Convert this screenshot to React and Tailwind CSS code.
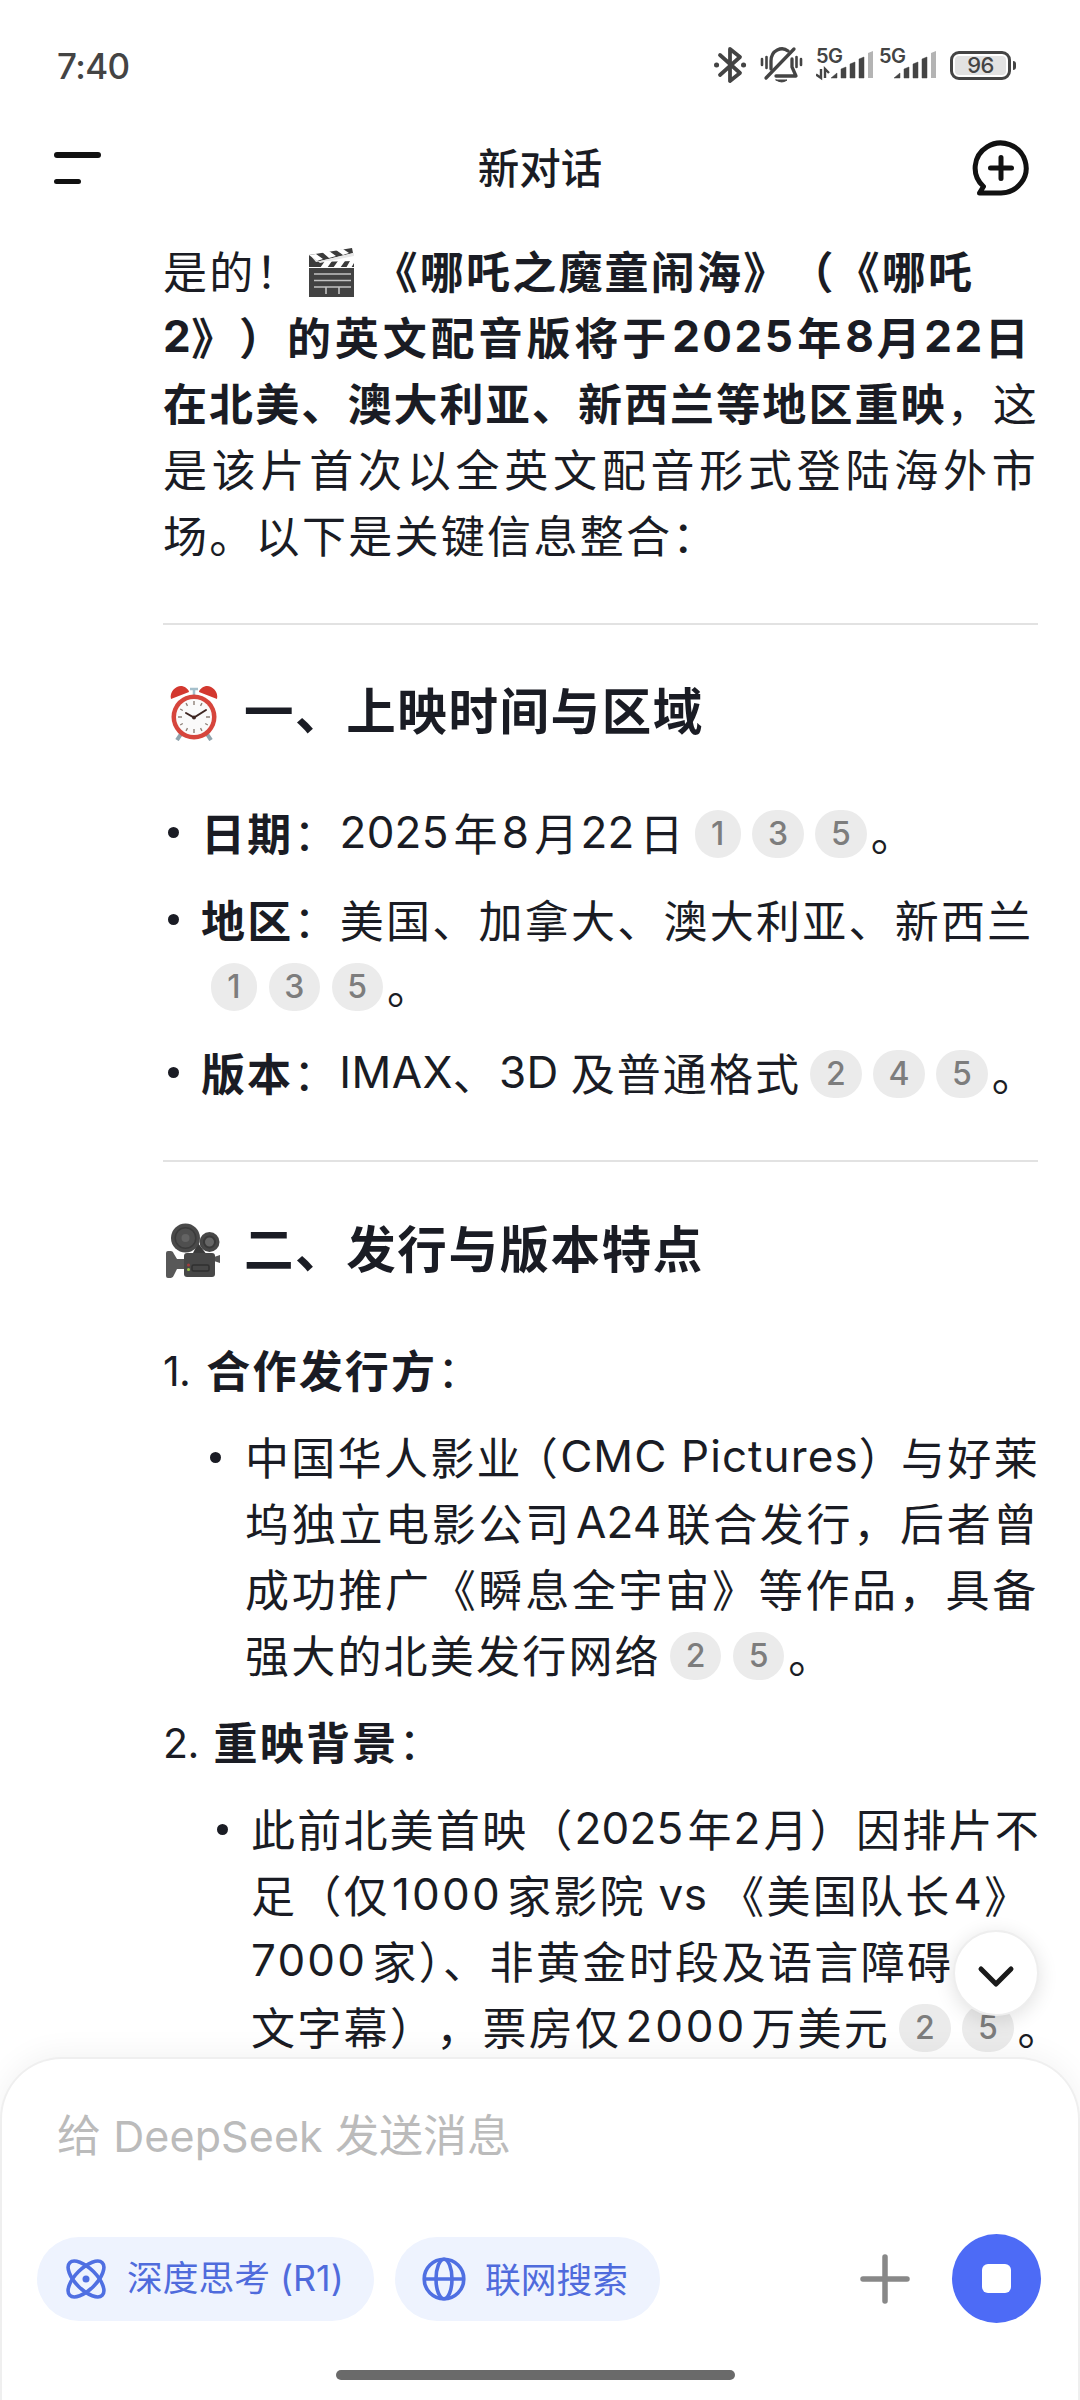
import React from 'react';

const Latin = ({ className = 'tracking-[0.4px]', children }) => (
  <span className={className} style={{ fontFamily: 'Inter, sans-serif' }}>{children}</span>
);

const Chip = ({ n }) => (
  <span
    className={`inline-flex h-12 shrink-0 items-center justify-center rounded-full bg-[#ebebeb] text-[32px] leading-none font-medium tracking-normal text-[#7d7d7d] ${n === 1 ? 'w-[46px]' : 'w-[51.5px]'}`}
    style={{ fontFamily: 'Inter, sans-serif' }}
  >
    {n}
  </span>
);

const Chips = ({ items, className = 'mr-[4px] ml-[9px]' }) => (
  <span className={`mt-1 flex shrink-0 items-center gap-[11.5px] ${className}`}>
    {items.map((n) => <Chip key={n} n={n} />)}
  </span>
);

const Line = ({ className = '', children }) => (
  <div className={`flex h-[66px] items-center whitespace-pre ${className}`}>{children}</div>
);

const Bullet = ({ className = '' }) => (
  <span className={`size-[11px] shrink-0 rounded-full bg-[#1a1c24] ${className}`} />
);

const ClapperIcon = () => (
  <svg width="47" height="51" viewBox="0 0 47 51" className="mt-1 ml-[6px] shrink-0">
    <path d="M1 8 L44 1 L45 6 L8 15 L46 14 V20 H1Z" fill="#3b3b3b" />
    <path d="M1 8 L8 7 L15 12 L9 14Z M14 5 L21 4 L28 9 L21 11Z M28 3 L35 2 L41 6 L35 8Z" fill="#fff" />
    <path d="M2 8 L8 15 L46 6 V9 L12 16Z" fill="#e8e8e8" />
    <path d="M17 14 H24 L19 21 H12Z M30 14 H37 L32 21 H25Z M42 14 H46 V16 L43 21 H38Z" fill="#fff" />
    <rect x="1" y="21" width="45" height="29" fill="#424242" />
    <path d="M6 27H43M6 33.5H43M6 40H43M18 40V47M31 40V47" stroke="#c2c2c2" strokeWidth="1.6" />
  </svg>
);

const AlarmIcon = () => (
  <svg width="50" height="56" viewBox="0 0 50 56" className="shrink-0">
    <path d="M12 49 L8 55 M38 49 L42 55" stroke="#90a4ae" strokeWidth="4" />
    <path d="M25 3V10M21 4H29" stroke="#a5c0cc" strokeWidth="2.5" />
    <path d="M2 14C0 6 8 0 13 1C17 2 20 5 20 7Z M48 14C50 6 42 0 37 1C33 2 30 5 30 7Z" fill="#d3382f" />
    <circle cx="25" cy="32" r="22.5" fill="#d6453c" />
    <circle cx="25" cy="32" r="18" fill="#fafafa" />
    <path d="M25 16v4M25 44v4M9 32h4M37 32h4M17 18.200l1.500 2.600M33 18.200l-1.500 2.600M17 45.800l1.500-2.600M33 45.800l-1.500-2.600M11.200 24l2.600 1.500M11.200 40l2.600-1.500M38.800 40l-2.600-1.500" stroke="#8d8078" strokeWidth="1.4" />
    <path d="M17 28L25 32.500L37 25" stroke="#3e2723" strokeWidth="2" fill="none" strokeLinecap="round" />
    <circle cx="25" cy="32.500" r="2" fill="#3e2723" />
  </svg>
);

const CameraIcon = () => (
  <svg width="56" height="56" viewBox="0 0 56 56" className="shrink-0">
    <path d="M27 32L33 20L42 32Z" fill="#3a3a3a" />
    <circle cx="20.500" cy="15" r="14.500" fill="#4a4a4a" />
    <circle cx="20.500" cy="15" r="10.300" fill="#4f4f4f" stroke="#3b3b3b" strokeWidth="1.500" />
    <circle cx="20.500" cy="15" r="4" fill="#636363" />
    <circle cx="44.500" cy="19" r="10" fill="#474747" />
    <circle cx="44.500" cy="19" r="5.500" fill="#666" stroke="#393939" strokeWidth="2" />
    <path d="M1 30Q1 28 3 28H6Q8 28 9 31L12 36H19V46H12L9 52Q8 55 6 55H3Q1 55 1 53Z" fill="#585858" />
    <path d="M55 32V40L49 38V34Z" fill="#555" />
    <rect x="19" y="30" width="31" height="24" rx="3" fill="#474747" />
    <rect x="27" y="42" width="17" height="6" rx="1.500" fill="none" stroke="#303030" strokeWidth="1.500" />
    <circle cx="23.500" cy="42" r="1.500" fill="#a23b3b" />
    <circle cx="23.500" cy="46.500" r="1.500" fill="#9bc44a" />
  </svg>
);

const BluetoothIcon = () => (
  <svg width="34" height="38" viewBox="0 0 34 38" fill="none" stroke="#444" strokeWidth="3.800" strokeLinejoin="round" strokeLinecap="round">
    <path d="M7 9L27 27L17 35V3L27 11L7 29" />
    <path d="M3.500 19h.1M30.500 19h.1" strokeWidth="5" />
  </svg>
);

const MutedBellIcon = () => (
  <svg width="43" height="38" viewBox="0 0 43 38" fill="none" stroke="#444" strokeWidth="3.300" strokeLinecap="round">
    <path d="M34 3L6 32" />
    <path d="M11 23V15C11 4 22 0 28 5" />
    <path d="M32 13V21L36 30H16" strokeLinejoin="round" />
    <path d="M16 34H27Q22 38 16 34Z" fill="#444" strokeWidth="1" />
    <path d="M2 13V19M6.500 11V22M36.500 11V21M41 13V19" strokeWidth="2.600" />
  </svg>
);

const Signal = ({ data }) => (
  <div className="relative h-[32px] w-[58px]">
    <span className="absolute -top-[3px] left-0 text-[20px] leading-none font-semibold tracking-[-0.7px] text-[#444]" style={{ fontFamily: 'Inter, sans-serif' }}>5G</span>
    <svg width="58" height="32" viewBox="0 0 58 32" className="absolute top-0 left-0">
      {data && <path d="M5 20V29L0 25.500M9 29V20L13 24" fill="none" stroke="#444" strokeWidth="2.400" />}
      <path d="M15 29L21 24V29Z M25 20L30 18V29H25Z M34 15L39 13V29H34Z M43 10L48 8V29H43Z" fill="#444" stroke="#444" strokeWidth=".5" />
      <path d="M52 4L57 2V29H52Z" fill="#b4b4b4" />
    </svg>
  </div>
);

const StatusBar = () => (
  <div className="flex h-[130px] items-center justify-between pr-[64px] pl-[57px]">
    <span className="mt-[2px] text-[35px] leading-none font-medium tracking-[-0.6px] text-[#444]" style={{ fontFamily: 'Inter, sans-serif' }}>7:40</span>
    <div className="flex items-center">
      <BluetoothIcon />
      <span className="w-[13px]" />
      <MutedBellIcon />
      <span className="w-[13px]" />
      <Signal data />
      <span className="w-[5px]" />
      <Signal />
      <span className="w-[13px]" />
      <div className="flex h-[29px] w-[61px] items-center justify-center rounded-[9px] border-[3px] border-[#444] p-[2px]">
        <span className="flex h-full w-full items-center justify-center rounded-[4px] bg-[#e2e2e2] text-[22px] leading-none font-medium tracking-[-0.5px] text-[#444]" style={{ fontFamily: 'Inter, sans-serif' }}>96</span>
      </div>
      <span className="ml-[2px] h-[9px] w-[3px] rounded-r-full bg-[#444]" />
    </div>
  </div>
);

const Header = () => (
  <div className="flex h-[76px] items-center justify-between pr-[50px] pl-[54px]">
    <div className="flex w-[54px] flex-col gap-[21px]">
      <span className="h-[5.500px] w-[47px] rounded-full bg-[#111]" />
      <span className="h-[5.500px] w-[27px] rounded-full bg-[#111]" />
    </div>
    <h1 className="-mt-1 text-[41.500px] font-medium text-[#1a1c24]">新对话</h1>
    <svg width="58" height="56" viewBox="0 0 58 56" fill="none" stroke="#111" strokeWidth="5" strokeLinecap="round" strokeLinejoin="round">
      <path d="M29 53H7.500L11.500 46.500A25.500 25 0 1 1 29 53Z" />
      <path d="M29 17.500V38.500M18.500 28H39.500" />
    </svg>
  </div>
);

const Message = () => (
  <div className="flex w-[875px] flex-col text-[44px] leading-[66px] text-[#1a1c24]">
    <Line className="tracking-[2.200px]">
      是的！<ClapperIcon /><b className="ml-[19px] font-bold">《哪吒之魔童闹海》（《哪吒</b>
    </Line>
    <Line className="font-bold tracking-[3.900px]"><Latin className="tracking-[0.4px]">2</Latin>》）的英文配音版将于<Latin className="mr-[2px] ml-[2px] tracking-[2.500px]">2025</Latin>年<Latin className="tracking-[2.500px]">8</Latin>月<Latin className="tracking-[2.500px]">22</Latin>日</Line>
    <Line className="tracking-[2.100px]"><b className="font-bold">在北美、澳大利亚、新西兰等地区重映</b>，这</Line>
    <Line className="tracking-[4.750px]">是该片首次以全英文配音形式登陆海外市</Line>
    <Line className="tracking-[2.300px]">场。以下是关键信息整合：</Line>

    <div className="mt-[56px] h-[2px] bg-[#e2e2e2]" />

    <h2 className="mt-[50px] flex h-[68px] items-center text-[49.500px] font-bold tracking-[1.600px]">
      <span className="mt-[7px] mr-[25px] ml-[6px] flex"><AlarmIcon /></span>一、上映时间与区域
    </h2>

    <ul className="mt-[56px] flex flex-col gap-[21px]">
      <li>
        <Line className="tracking-[2.200px]"><Bullet className="mr-[22px] ml-[5px]" /><b className="font-bold">日期</b>：<Latin className="mr-[5px] tracking-[0.2px]">2025</Latin>年<Latin className="mr-[5px] ml-[2px] tracking-[0.2px]">8</Latin>月<Latin className="mr-[5px] tracking-[0.2px]">22</Latin>日<Chips items={[1, 3, 5]} />。</Line>
      </li>
      <li>
        <Line className="tracking-[2.250px]"><Bullet className="mr-[22px] ml-[5px]" /><b className="font-bold">地区</b>：美国、加拿大、澳大利亚、新西兰</Line>
        <Line><Chips items={[1, 3, 5]} className="mr-[4px] ml-[48px]" />。</Line>
      </li>
      <li>
        <Line className="tracking-[2.100px]"><Bullet className="mr-[22px] ml-[5px]" /><b className="font-bold">版本</b>：<Latin>IMAX</Latin>、<Latin>3D</Latin> 及普通格式<Chips items={[2, 4, 5]} />。</Line>
      </li>
    </ul>

    <div className="mt-[55px] h-[2px] bg-[#e2e2e2]" />

    <h2 className="mt-[51px] flex h-[68px] items-center text-[49.500px] font-bold tracking-[1.600px]">
      <span className="mt-[7px] mr-[23px] ml-[2px] flex"><CameraIcon /></span>二、发行与版本特点
    </h2>

    <ol className="mt-[55px] flex flex-col gap-[21px]">
      <li className="flex flex-col gap-[21px]">
        <Line className="tracking-[2.200px]"><Latin className="mt-[3px] mr-[5px] text-[41px] tracking-[-0.6px]">1. </Latin><b className="font-bold">合作发行方</b>：</Line>
        <div className="flex">
          <Bullet className="mt-[29px] mr-[24px] ml-[47px]" />
          <div>
            <Line className="tracking-[2.300px]">中国华人影业<span className="ml-[13px] [font-feature-settings:'halt']">（</span><Latin className="tracking-[1.100px]">CMC Pictures</Latin><span className="mr-[18px] [font-feature-settings:'halt']">）</span>与好莱</Line>
            <Line className="tracking-[2.700px]">坞独立电影公司<Latin className="mr-[5px] ml-[4px] tracking-[0.2px]">A24</Latin>联合发行，后者曾</Line>
            <Line className="tracking-[2.700px]">成功推广《瞬息全宇宙》等作品，具备</Line>
            <Line className="tracking-[2.200px]">强大的北美发行网络<Chips items={[2, 5]} />。</Line>
          </div>
        </div>
      </li>
      <li className="flex flex-col gap-[21px]">
        <Line className="tracking-[2.200px]"><Latin className="mt-[3px] mr-[4px] text-[41px] tracking-[-0.6px]">2. </Latin><b className="font-bold">重映背景</b>：</Line>
        <div className="flex">
          <Bullet className="mt-[29px] mr-[23px] ml-[54px]" />
          <div>
            <Line className="tracking-[2.200px]">此前北美首映（<Latin className="mr-[4px] tracking-[0.2px]">2025</Latin>年<Latin className="mr-[3px] tracking-[0.2px]">2</Latin>月）因排片不</Line>
            <Line className="tracking-[2.300px]">足（仅<Latin className="mr-[5px] ml-[2px] tracking-[2.200px]">1000</Latin>家影院<Latin> vs </Latin>《美国队长<Latin className="ml-[2px]">4</Latin>》</Line>
            <Line className="tracking-[2.400px] [text-spacing-trim:normal]"><Latin className="mr-[5px] tracking-[2.200px]">7000</Latin>家）、非黄金时段及语言障碍</Line>
            <Line className="tracking-[2.300px]">文字幕），票房仅<Latin className="mr-[4px] ml-[4px] tracking-[2.900px]">2000</Latin>万美元<Chips items={[2, 5]} />。</Line>
          </div>
        </div>
      </li>
    </ol>
  </div>
);

const Composer = () => (
  <div className="relative flex h-[343px] shrink-0 flex-col rounded-t-[62px] border-2 border-b-0 border-[#efefef] bg-white shadow-[0_-4px_30px_rgba(0,0,0,0.05)]">
    <p className="mt-[41px] ml-[55px] text-[44px] leading-[66px] text-[#bbb]">给<Latin className="text-[43px] tracking-[0.1px]"> DeepSeek </Latin>发送消息</p>
    <div className="mt-[65px] flex items-center pr-[37px] pl-[35px] text-[35.750px] text-[#4f6bdc]">
      <button className="flex h-[84px] w-[337px] items-center rounded-full bg-[#eef3fe] pl-[28px]">
        <svg width="42" height="42" viewBox="0 0 42 42" fill="none" stroke="#4f6fe2" strokeWidth="3.600">
          <ellipse cx="21" cy="21" rx="23" ry="10.500" transform="rotate(45 21 21)" />
          <ellipse cx="21" cy="21" rx="23" ry="10.500" transform="rotate(-45 21 21)" />
          <circle cx="21" cy="21" r="3.500" fill="#4f6fe2" stroke="none" />
        </svg>
        <span className="-mt-[2px] ml-[20px] whitespace-pre">深度思考<Latin className="text-[35.750px] tracking-normal"> (R1)</Latin></span>
      </button>
      <button className="ml-[21px] flex h-[84px] w-[265px] items-center rounded-full bg-[#eef3fe] pl-[27px]">
        <svg width="44" height="44" viewBox="0 0 44 44" fill="none" stroke="#4f6fe2" strokeWidth="3.600">
          <circle cx="22" cy="22" r="19.800" />
          <ellipse cx="22" cy="22" rx="8" ry="19.800" />
          <path d="M2 22H42" />
        </svg>
        <span className="-mt-[2px] ml-[19px]">联网搜索</span>
      </button>
      <svg width="50" height="50" viewBox="0 0 50 50" fill="none" stroke="#888" strokeWidth="5.500" strokeLinecap="round" className="ml-auto">
        <path d="M25 3V47M3 25H47" />
      </svg>
      <button className="ml-[42px] flex size-[89px] items-center justify-center rounded-full bg-[#4d6bf6]">
        <span className="size-[29px] rounded-[6px] bg-white" />
      </button>
    </div>
    <div className="mt-[47px] ml-[334px] h-[10px] w-[399px] rounded-full bg-[#6a6a6a]" />
  </div>
);

export default function App() {
  return (
    <div
      className="flex h-[2400px] w-[1080px] flex-col overflow-hidden bg-white [text-spacing-trim:space-all]"
      style={{ fontFamily: '"Noto Sans CJK SC", sans-serif' }}
    >
      <StatusBar />
      <Header />
      <main className="relative h-[1851px] shrink-0 pt-[31px] pl-[163px]">
        <Message />
        <button className="absolute top-[1724px] left-[953px] flex size-[86px] items-center justify-center rounded-full border-2 border-[#eee] bg-white shadow-[0_4px_20px_rgba(0,0,0,0.12)]">
          <svg width="38" height="24" viewBox="0 0 38 24" fill="none" stroke="#1a1a1a" strokeWidth="5" strokeLinecap="round" strokeLinejoin="round" className="mt-[7px]">
            <path d="M4 4L19 19L34 4" />
          </svg>
        </button>
      </main>
      <Composer />
    </div>
  );
}
